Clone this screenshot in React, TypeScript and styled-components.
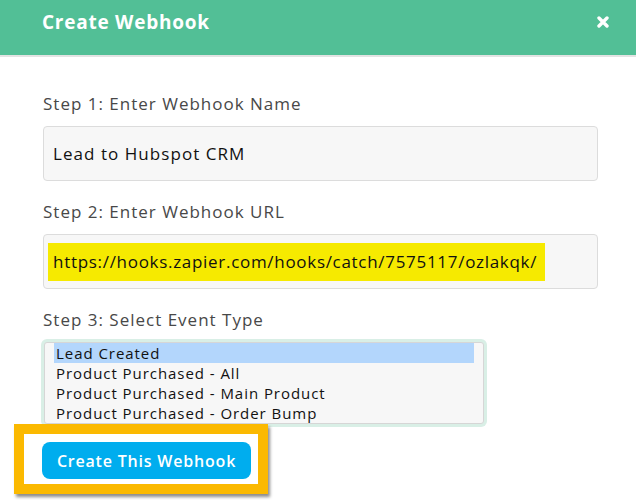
import React from "react";
import styled, { createGlobalStyle } from "styled-components";

const Global = createGlobalStyle`
  html, body { margin: 0; padding: 0; background: #ffffff; }
  body { font-family: "Open Sans", "Liberation Sans", sans-serif; width: 636px; height: 500px; overflow: hidden; }
  * { box-sizing: border-box; }
`;

const Modal = styled.div`
  width: 636px;
  height: 500px;
  background: #ffffff;
  display: flex;
  flex-direction: column;
`;

const Header = styled.div`
  height: 57px;
  background: #52bf96;
  border-bottom: 2px solid #e3e3e3;
  display: flex;
  align-items: center;
  justify-content: space-between;
  padding: 0 27px 12px 42px;
`;

const Title = styled.h1`
  margin: 0;
  font-size: 19px;
  line-height: 24px;
  font-weight: 700;
  color: #ffffff;
  letter-spacing: 0.75px;
`;

const CloseButton = styled.button`
  border: 0;
  background: transparent;
  padding: 0;
  width: 12px;
  height: 12px;
  display: flex;
  cursor: pointer;
`;

const Body = styled.div`
  padding: 35px 38px 0 43px;
  display: flex;
  flex-direction: column;
`;

const Field = styled.div<{ $gap?: number }>`
  display: flex;
  flex-direction: column;
  margin-bottom: ${(p) => p.$gap ?? 19}px;
`;

const Label = styled.label`
  font-size: 17px;
  line-height: 24px;
  color: #484848;
  letter-spacing: 1px;
  margin-bottom: 10px;
`;

const InputBox = styled.div`
  height: 55px;
  background: #f7f7f7;
  border: 1px solid #dcdcdc;
  border-radius: 4px;
  display: flex;
  align-items: center;
  padding: 0 5px 0 4px;
  font-size: 17px;
  color: #111111;
`;

const Text = styled.span<{ $highlight?: boolean }>`
  padding: ${(p) => (p.$highlight ? "9px 8px 9px 5px" : "9px 5px")};
  line-height: 20px;
  letter-spacing: ${(p) => (p.$highlight ? "0.7px" : "1.05px")};
  background: ${(p) => (p.$highlight ? "#f6ea00" : "transparent")};
`;

const ListBox = styled.div`
  width: 440px;
  margin-left: 1px;
  border: 1px solid #d6d6d6;
  border-radius: 3px;
  background: #f7f7f7;
  box-shadow: 0 0 0 3px #d9efe6;
  padding: 0 9px 0 9px;
  display: flex;
  flex-direction: column;
`;

const Option = styled.div<{ $selected?: boolean }>`
  height: 20px;
  line-height: 20px;
  font-size: 15px;
  letter-spacing: 0.95px;
  padding-left: 2px;
  color: #111111;
  background: ${(p) => (p.$selected ? "#b3d6fc" : "transparent")};
`;

const Actions = styled.div`
  position: relative;
  padding: 18px 0 0 0;
  display: flex;
`;

const PrimaryButton = styled.button`
  height: 37px;
  width: 209px;
  margin-left: -1px;
  border: 0;
  border-radius: 8px;
  background: #00adee;
  color: #ffffff;
  font-family: inherit;
  font-size: 16px;
  font-weight: 600;
  letter-spacing: 0.8px;
  cursor: pointer;
`;

const Callout = styled.div`
  position: absolute;
  left: -29px;
  top: 0;
  width: 254px;
  height: 70px;
  border: 10px solid #fbb900;
  box-shadow: 2px 3px 3px rgba(0, 0, 0, 0.45);
  pointer-events: none;
`;

const options = [
  "Lead Created",
  "Product Purchased - All",
  "Product Purchased - Main Product",
  "Product Purchased - Order Bump",
];

export default function App() {
  return (
    <>
      <Global />
      <Modal>
        <Header>
          <Title>Create Webhook</Title>
          <CloseButton aria-label="Close">
            <svg width="12" height="12" viewBox="0 0 12 12">
              <path
                d="M2 2 L10 10 M10 2 L2 10"
                stroke="#ffffff"
                strokeWidth="3.4"
                strokeLinecap="round"
              />
            </svg>
          </CloseButton>
        </Header>
        <Body>
          <Field>
            <Label>Step 1: Enter Webhook Name</Label>
            <InputBox>
              <Text>Lead to Hubspot CRM</Text>
            </InputBox>
          </Field>
          <Field>
            <Label>Step 2: Enter Webhook URL</Label>
            <InputBox>
              <Text $highlight>https://hooks.zapier.com/hooks/catch/7575117/ozlakqk/</Text>
            </InputBox>
          </Field>
          <Field $gap={0}>
            <Label>Step 3: Select Event Type</Label>
            <ListBox role="listbox">
              {options.map((o, i) => (
                <Option key={o} role="option" $selected={i === 0}>
                  {o}
                </Option>
              ))}
            </ListBox>
          </Field>
          <Actions>
            <PrimaryButton>Create This Webhook</PrimaryButton>
            <Callout />
          </Actions>
        </Body>
      </Modal>
    </>
  );
}
